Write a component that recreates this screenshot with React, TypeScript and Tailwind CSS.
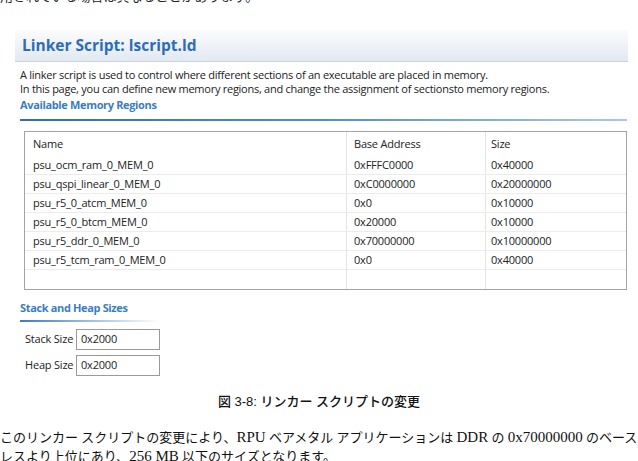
const rows = [
  ["psu_ocm_ram_0_MEM_0", "0xFFFC0000", "0x40000"],
  ["psu_qspi_linear_0_MEM_0", "0xC0000000", "0x20000000"],
  ["psu_r5_0_atcm_MEM_0", "0x0", "0x10000"],
  ["psu_r5_0_btcm_MEM_0", "0x20000", "0x10000"],
  ["psu_r5_ddr_0_MEM_0", "0x70000000", "0x10000000"],
  ["psu_r5_tcm_ram_0_MEM_0", "0x0", "0x40000"],
];

const ui = "font-['Open_Sans',sans-serif]";
const jp = "font-['Liberation_Serif','Noto_Sans_CJK_JP',serif]";

export default function App() {
  return (
    <div className="relative h-[461px] w-[638px] overflow-hidden bg-white">
      {/* clipped line from the page above */}
      <div className={`${jp} -mt-[13px] whitespace-nowrap text-[13px] leading-[20px] text-[#222]`}>
        用されている場合は異なることがあります。
      </div>

      {/* header band */}
      <div className={`${ui} mt-[23px] ml-[15px] flex h-[32px] w-[613px] items-center border-b border-[#c9d2dc] bg-gradient-to-b from-[#fbfcfe] to-[#e2e9f1] pl-[7px]`}>
        <span className="text-[15.5px] font-bold text-[#2d6db6]">Linker Script: lscript.ld</span>
      </div>

      <div className={`${ui} ml-[20px] mt-[6px] text-[11px] leading-[14px] tracking-[-0.26px] text-[#222]`}>
        <div>A linker script is used to control where different sections of an executable are placed in memory.</div>
        <div>In this page, you can define new memory regions, and change the assignment of sectionsto memory regions.</div>
      </div>

      <div className={`${ui} ml-[20px] mt-[1px] text-[11px] font-bold leading-[16px] tracking-[-0.35px] text-[#3a7cc3]`}>
        Available Memory Regions
      </div>
      <div className="ml-[20px] mt-[6px] h-[2px] w-[607px] bg-gradient-to-r from-[#2f6fae] via-[#4f8fcf] to-[#a9c8e6]" />

      {/* table */}
      <div className={`${ui} ml-[24px] mt-[10px] h-[159px] w-[603px] border border-[#a4a4a4] text-[11px] tracking-[-0.2px] text-[#222]`}>
        <div className="grid h-[24px] grid-cols-[321px_139px_1fr] items-center">
          <div className="pl-[8px]">Name</div>
          <div className="flex h-full items-center border-l border-[#e4e4e4] pl-[7px]">Base Address</div>
          <div className="flex h-full items-center border-l border-[#e4e4e4] pl-[5px]">Size</div>
        </div>
        {[...rows, ["", "", ""]].map((r, i) => (
          <div key={i} className="grid h-[19px] grid-cols-[321px_139px_1fr] items-center border-b border-[#ececec] last:border-b-0">
            <div className="pl-[8px]">{r[0]}</div>
            <div className="flex h-full items-center border-l border-[#e4e4e4] pl-[7px]">{r[1]}</div>
            <div className="flex h-full items-center border-l border-[#e4e4e4] pl-[5px]">{r[2]}</div>
          </div>
        ))}
      </div>

      {/* stack and heap */}
      <div className={`${ui} ml-[20px] mt-[10px] text-[11px] font-bold leading-[16px] tracking-[-0.35px] text-[#3a7cc3]`}>
        Stack and Heap Sizes
      </div>
      <div className="ml-[20px] mt-[4px] h-[2px] w-[140px] bg-gradient-to-r from-[#3a7cc3] via-[#9cc0e4] to-white" />
      <div className={`${ui} ml-[25px] mt-[7px] flex flex-col gap-[5px] text-[11px] tracking-[-0.2px] text-[#222]`}>
        {["Stack Size", "Heap Size"].map((l) => (
          <div key={l} className="flex items-center">
            <span className="w-[51px]">{l}</span>
            <div className="flex h-[21px] w-[84px] items-center border border-[#9a9a9a] pl-[4px]">0x2000</div>
          </div>
        ))}
      </div>

      {/* caption */}
      <div className="mt-[17px] text-center font-['Liberation_Sans','Noto_Sans_CJK_JP',sans-serif] text-[13px] font-medium leading-[18px] text-[#111]">
        図 3-8: リンカー スクリプトの変更
      </div>

      <div className={`${jp} mt-[17px] whitespace-nowrap text-[13px] leading-[19px] text-[#111]`}>
        <div>
          このリンカー スクリプトの変更により、<span className="text-[15px]">RPU</span> ベアメタル アプリケーションは{" "}
          <span className="text-[15px]">DDR</span> の <span className="text-[15px]">0x70000000</span> のベースアド
        </div>
        <div>
          レスより上位にあり、<span className="text-[15px]">256 MB</span> 以下のサイズとなります。
        </div>
      </div>
    </div>
  );
}
